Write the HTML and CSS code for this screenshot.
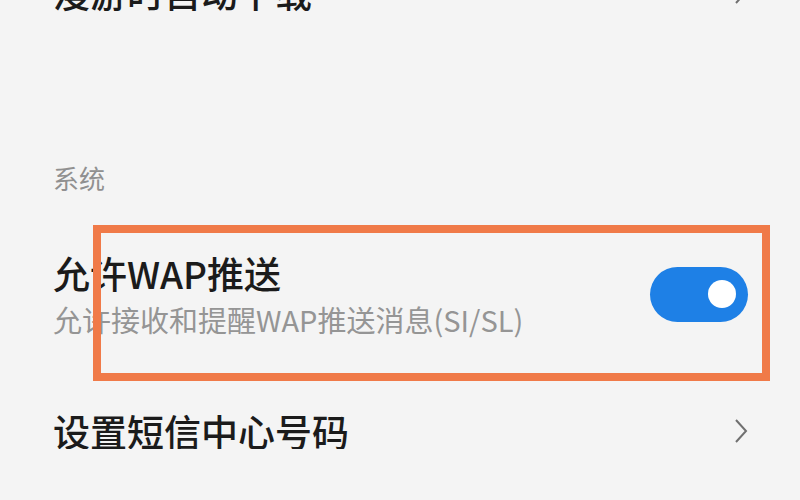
FILE: index.html
```html
<!DOCTYPE html>
<html lang="zh-CN">
<head>
  <meta charset="UTF-8">
  <meta name="viewport" content="width=device-width, initial-scale=1.0">
  <title>短信设置</title>
  <link rel="stylesheet" href="styles.css">
</head>
<body>
  <div class="settings">
    <div class="row row-cut">
      <span class="title">漫游时自动下载</span>
      <svg class="chevron" viewBox="0 0 14 26"><polyline points="2,2 12,13 2,24"/></svg>
    </div>

    <div class="group-label">系统</div>

    <div class="row row-marked">
      <div class="texts">
        <span class="title">允许WAP推送</span>
        <span class="sub">允许接收和提醒WAP推送消息(SI/SL)</span>
      </div>
      <div class="switch on"><span class="knob"></span></div>
    </div>

    <div class="row row-last">
      <span class="title">设置短信中心号码</span>
      <svg class="chevron" viewBox="0 0 14 26"><polyline points="2,2 12,13 2,24"/></svg>
    </div>
  </div>
</body>
</html>
```

FILE: styles.css
```css
*{
  box-sizing: border-box;
  margin: 0;
  padding: 0;
}
body{
  background: #f4f4f4;
  font-family: "Noto Sans CJK SC", "Noto Sans", sans-serif;
  color: #1b1b1b;
  overflow: hidden;
}
.settings{
  padding: 0 52px 0 53px;
}
.row{
  display: flex;
  align-items: center;
  justify-content: space-between;
}
.title{
  font-size: 37px;
  line-height: 36px;
  font-weight: 500;
}
.sub{
  font-size: 29px;
  line-height: 27px;
  color: #959595;
}
.texts{
  display: flex;
  flex-direction: column;
  gap: 15px;
}
.row-cut{
  margin-top: -26px;
}
.group-label{
  margin-top: 155px;
  font-size: 26px;
  line-height: 26px;
  color: #909090;
}
.row-marked{
  position: relative;
  margin-top: 64px;
}
/* annotation frame drawn over the row */
.row-marked::after{
  content: "";
  position: absolute;
  left: 40px;
  top: -30px;
  right: -22px;
  bottom: -48px;
  border: 8px solid #f07a48;
}
.row-last{
  margin-top: 80px;
}
.chevron{
  width: 14px;
  height: 26px;
  fill: none;
  stroke: #707070;
  stroke-width: 2;
}
.switch{
  width: 98px;
  height: 55px;
  border-radius: 28px;
  background: #1e80e6;
  display: flex;
  align-items: center;
  justify-content: flex-end;
  padding-right: 12px;
}
.knob{
  width: 28px;
  height: 28px;
  border-radius: 50%;
  background: #fff;
}
```
